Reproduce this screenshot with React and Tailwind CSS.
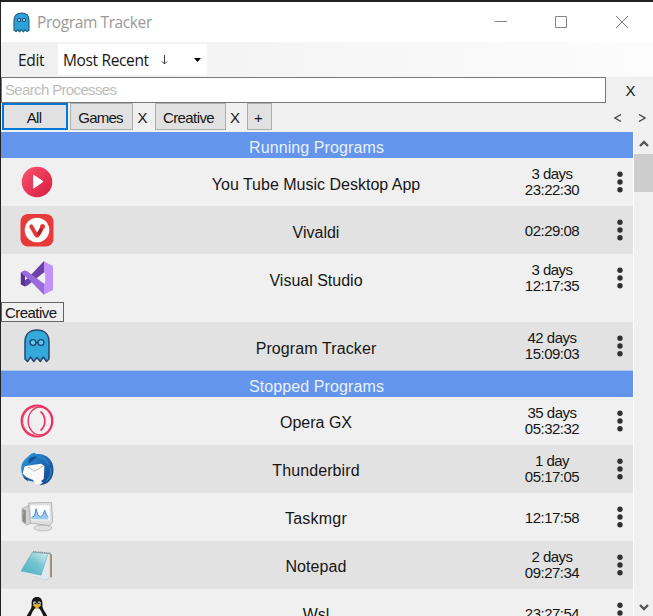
import React from 'react';

function Ghost({ className }) {
  return (
    <svg className={className} viewBox="0 0 26 34">
      <path
        d="M1 30V13C1 5 6 1 13 1s12 4 12 12v17l-2.5 2.500-3.200-4.500-3 4.500L13 28.500 9.700 32.500l-3-4.500L3.500 32.500z"
        fill="#34a9da" stroke="#26446f" strokeWidth="1.5" strokeLinejoin="round"
      />
      <g fill="#5fd0f2" stroke="#20406e" strokeWidth="1.3">
        <circle cx="9" cy="13.6" r="2.9" />
        <circle cx="17" cy="13.6" r="2.9" />
      </g>
      <path d="M12 13.6h2" stroke="#20406e" strokeWidth="1.2" />
    </svg>
  );
}

function SmallGhost() {
  return (
    <svg className="h-[21px] w-[17px]" viewBox="0 0 17 21">
      <path
        d="M1 18V8.500C1 3.500 4 1 8.500 1S16 3.500 16 8.500V18l-2 1.700-1.800-2-1.800 2.200-1.900-2.200-1.900 2.200-1.800-2.200-1.800 2z"
        fill="#2da2d6" stroke="#1c5a85" strokeWidth="1.1" strokeLinejoin="round"
      />
      <g fill="#173f66">
        <circle cx="6" cy="8" r="2" />
        <circle cx="11" cy="8" r="2" />
      </g>
      <g fill="#d9f6ff">
        <circle cx="6" cy="8" r="1" />
        <circle cx="11" cy="8" r="1" />
      </g>
    </svg>
  );
}

function YouTubeMusic() {
  return (
    <svg className="size-8" viewBox="0 0 32 32">
      <defs>
        <linearGradient id="ytm" x1="0" y1="0" x2="1" y2="1">
          <stop offset="0" stopColor="#f95570" />
          <stop offset="1" stopColor="#d91a3e" />
        </linearGradient>
      </defs>
      <circle cx="16" cy="16" r="15.3" fill="url(#ytm)" />
      <path d="M12.7 9.3 22 15.5l-9.3 6.6z" fill="#fff" stroke="#fff" strokeWidth="1" strokeLinejoin="round" />
    </svg>
  );
}

function Vivaldi() {
  return (
    <svg className="size-[34px]" viewBox="0 0 34 34">
      <rect x=".5" y="1" width="33" height="32.5" rx="7.5" fill="#e93a3b" />
      <circle cx="17" cy="17" r="12.3" fill="#fff" />
      <path d="M11.3 13.4 16.2 22q.9 1.4 1.8 0l3.6-6.2" fill="none" stroke="#e23a3b" strokeWidth="4" strokeLinecap="round" strokeLinejoin="round" />
      <circle cx="22.5" cy="13.4" r="2.5" fill="#e23a3b" />
      <path d="m18.7 20.8 2.4-4.2" stroke="#a92128" strokeWidth="3" strokeLinecap="round" />
    </svg>
  );
}

function VisualStudio() {
  return (
    <svg className="size-[34px]" viewBox="0 0 34 34">
      <path d="M.8 11.500 5 9.500v16L.8 23.500z" fill="#563196" />
      <path d="M4.500 19.800 8.500 16.600 23.500.6h1V11L7.500 24.400 5 25.500z" fill="#6b42a8" />
      <path d="M.8 11.500 5 9.500l2.500 1L24.500 23v10.500h-1L8.500 18 4.500 15z" fill="#9a6bdc" />
      <path d="m24 .5 9 4.600v23.800l-9 4.600V23l1.200-1.500v-9L24 11z" fill="#c391fb" />
    </svg>
  );
}

function OperaGX() {
  return (
    <svg className="size-[34px]" viewBox="0 0 34 34">
      <g fill="none" stroke="#ec3361">
        <circle cx="17" cy="17" r="15.500" strokeWidth="1.900" />
        <ellipse cx="20" cy="17" rx="11.800" ry="14" strokeWidth="1.400" />
        <path d="M15 2.700C-1.500 6 -1.500 28 15 31.300" strokeWidth="1" />
        <path d="M20.500 7.500c5.800 5 5.800 14 0 19" strokeWidth="1.700" />
      </g>
    </svg>
  );
}

function Thunderbird() {
  return (
    <svg className="size-[34px]" viewBox="0 0 34 34">
      <defs>
        <linearGradient id="bird" x1="0" y1="0" x2="1" y2="1">
          <stop offset="0" stopColor="#2b9fdc" />
          <stop offset=".5" stopColor="#1f69b4" />
          <stop offset="1" stopColor="#173e86" />
        </linearGradient>
      </defs>
      <path d="M11.5 1.5 15 .8l1 1.4C26 1 33.5 8 33.5 17.5S28 33 19.5 33.2l4-3.2-6.5.3-8-1.6L3.8 26C-.6 18 .7 9.600 7 5.500z" fill="url(#bird)" />
      <path d="m4.500 14.500 2.500-.7 14-2 3.400 2.200-.7 13-2.400 1.800.5 2.200-5.800 1.500L13 28l-6.500-2.700-3.900-3.800z" fill="#fafafa" />
      <path d="m8 15 6.500 4.300L23.500 14" fill="none" stroke="#b9b5a8" strokeWidth=".9" />
      <path d="m4 25.500 2.600.8 1.500 3.200L4.900 27z" fill="#272e4e" />
      <path d="M9 7.500c2-3 6-3.500 8.500-2.500-2.500 1-3.500 3.500-7.500 4.800z" fill="#155093" />
      <path d="M17 4.500c6 0 11 4.500 11.500 9M26 29c4-3 5.500-8 4.500-13" fill="none" stroke="#3b8dd0" strokeWidth="1.500" opacity=".7" />
      <circle cx="9.500" cy="9.800" r=".9" fill="#0e2d5c" />
    </svg>
  );
}

function TaskManager() {
  return (
    <svg className="h-[30px] w-[34px]" viewBox="0 0 34 30">
      <path d="m2 6.500 6-2.700 5 1.500v15L6.500 23 2 19.500z" fill="#d2d2d2" stroke="#a0a0a0" strokeWidth=".6" />
      <path d="m2.500 7 3.300 1.200v13.500L2.500 19z" fill="#8b8b84" />
      <path d="M3.300 9.500v3" stroke="#9fb45c" strokeWidth="1" />
      <path d="M19 22h7l.6 4h-7.400z" fill="#b9b9b9" />
      <ellipse cx="23" cy="26" rx="9" ry="2.900" fill="#e0e0e0" stroke="#b0b0b0" strokeWidth=".7" />
      <path d="m8.500 1 23-.7 1.200 19.200L30 23.500l-19.500-2.200z" fill="#dedede" stroke="#a9a9a9" strokeWidth=".8" />
      <path d="m10.500 3.500 19-.3.600 15.300-18.700-.3z" fill="#fbfdff" />
      <path d="m11.500 16.500 3-2.500 1.600-7.500 1.700 6.500 2.700 1.700 2.500-2 1.700-4.700 1.600 5 2 1.500v3l-16.700-.2z" fill="#9cc8eb" />
      <path d="m11.500 15.500 3-1.700 1.600-7 1.700 6.200 2.700 1.700 2.500-2 1.700-4.500 1.600 4.800 2 1.500" fill="none" stroke="#4a8ccb" strokeWidth="1" />
    </svg>
  );
}

function Notepad() {
  return (
    <svg className="h-[31px] w-[34px]" viewBox="0 0 34 31">
      <defs>
        <linearGradient id="pad" x1="0" y1="1" x2=".9" y2="0">
          <stop offset="0" stopColor="#4cb1c2" />
          <stop offset=".55" stopColor="#74c3d0" />
          <stop offset="1" stopColor="#d0edf1" />
        </linearGradient>
      </defs>
      <path d="m28 3 4 1.500V27l-4 1z" fill="#a88a5b" />
      <path d="m28 3 2 1.500V28L25 30l-11-4z" fill="#e0e9ee" stroke="#b4bfc6" strokeWidth=".5" />
      <path d="M12.500 2 28 3.500 21 25.500 1 21z" fill="url(#pad)" stroke="#68aab6" strokeWidth=".6" />
      <path d="M1 21.500 21 25.800l3.500 3.700z" fill="#dcebf0" />
      <path d="m13 1.800 18 1.600" stroke="#7d8b8e" strokeWidth="1.600" strokeDasharray="1.2 1" />
    </svg>
  );
}

function Tux() {
  return (
    <svg className="h-[34px] w-7" viewBox="0 0 28 34">
      <path d="M14 1c-4 0-5.600 3-5.400 7 .2 3.500-.6 5-2.600 8-2.500 4-4.500 8-3.500 13h23c1-5-1-9-3.500-13-2-3-2.800-4.500-2.600-8C19.600 4 18 1 14 1z" fill="#171717" />
      <path d="M14 12c-3 0-4 3-5.500 6S6 25 8 29h12c2-4 1-8-.5-11S17 12 14 12z" fill="#f5f5f5" />
      <ellipse cx="11.700" cy="7.200" rx="1.700" ry="2" fill="#b8b8b8" />
      <ellipse cx="16.300" cy="7.200" rx="1.700" ry="2" fill="#b8b8b8" />
      <circle cx="12.200" cy="7.500" r=".8" fill="#222" />
      <circle cx="15.900" cy="7.500" r=".8" fill="#222" />
      <path d="M9.800 9.300 14 7.800l4.200 1.500L14 13z" fill="#e4b323" />
    </svg>
  );
}

function Kebab() {
  return (
    <svg className="h-[22px] w-1.5" viewBox="0 0 6 22" fill="#303030">
      <circle cx="3" cy="3.300" r="2.700" />
      <circle cx="3" cy="11" r="2.700" />
      <circle cx="3" cy="18.700" r="2.700" />
    </svg>
  );
}

function Row({ icon, name, days, time, shaded, stopped, tracking = 'tracking-normal' }) {
  return (
    <div className={`grid h-12 shrink-0 grid-cols-[114px_402px_70px_46px] items-center ${shaded ? 'bg-[#e2e2e2]' : 'bg-[#f0f0f0]'}`}>
      <div className="flex w-[72px] justify-center">{icon}</div>
      <div className={`text-center text-[16px] leading-5 ${stopped ? 'pt-1' : 'pt-1.5'} ${tracking}`}>{name}</div>
      <div className={`text-center text-[15px] leading-4 tracking-[-0.5px] ${days ? '' : 'pt-0.5'}`}>
        {days && <div>{days}</div>}
        <div>{time}</div>
      </div>
      <div className="pl-[30px]"><Kebab /></div>
    </div>
  );
}

function Heading({ children }) {
  return (
    <div className="h-[26px] shrink-0 bg-[#6495ed] pt-1.5 pr-px text-center text-[16px] leading-5 tracking-[0.1px] text-[#e9f1ff]">
      {children}
    </div>
  );
}

const tab = 'flex h-[27px] items-center justify-center bg-[#e1e1e1] pt-[3px] text-[15px] leading-5';

export default function App() {
  return (
    <div className="flex h-[616px] w-[653px] flex-col overflow-hidden border-t-2 border-l border-[#242124] bg-[#f0f0f0] font-['Liberation_Sans',sans-serif] text-[#161616]">
      <header className="flex h-10 shrink-0 items-center bg-white pl-3">
        <SmallGhost />
        <h1 className="ml-[7px] flex-1 pt-0.5 font-['Open_Sans',sans-serif] text-[15.500px] tracking-[-0.4px] text-[#999]">Program Tracker</h1>
        <svg className="mr-[25px] h-3 w-[133px]" viewBox="0 0 133 12" fill="none" stroke="#858585">
          <path d="M0 5.500h12M60.500.5h11v11h-11zM121 0l12 12M133 0l-12 12" />
        </svg>
      </header>

      <nav className="flex h-[35px] shrink-0 items-center bg-linear-to-r from-[#f0f0f0] to-[#fcfcfc] font-['Open_Sans',sans-serif] text-[15.500px] tracking-[-0.35px]">
        <span className="w-[57px] pt-0.5 pl-[17px]">Edit</span>
        <div className="flex h-[31px] w-[149px] items-center bg-white pl-[5px]">
          <span className="w-[97px] pt-0.5">Most Recent</span>
          <svg className="h-2.5 w-[9px]" viewBox="0 0 9 10" fill="none" stroke="#444">
            <path d="M4.500 0v9M2 6.500l2.500 2.500L7 6.500" />
          </svg>
          <svg className="ml-[25px] h-1 w-[7px]" viewBox="0 0 7 4"><path d="M0 0h7L3.500 4z" fill="#000" /></svg>
        </div>
      </nav>

      <div className="flex h-[26px] shrink-0 items-center">
        <div className="flex h-[26px] w-[605px] shrink-0 items-center border border-[#777] bg-white pl-[3px] text-[15px] tracking-[-0.65px] text-[#bcbcbc]">Search Processes</div>
        <span className="flex-1 pt-0.5 pl-0.5 text-center text-[15px]">X</span>
      </div>

      <div className="flex h-[29px] shrink-0 items-start text-[15px]">
        <button className={`${tab} ml-[1px] w-[66px] border-2 border-[#0078d7] pr-0.5 tracking-[-0.7px]`}>All</button>
        <button className={`${tab} ml-[2px] w-[63px] border border-[#adadad] pr-0.5 tracking-[-0.8px]`}>Games</button>
        <span className="w-[19px] text-center leading-[30px]">X</span>
        <button className={`${tab} ml-[3px] w-[71px] border border-[#adadad] pr-1 tracking-[-0.6px]`}>Creative</button>
        <span className="w-[18px] text-center leading-[30px]">X</span>
        <button className={`${tab} ml-[3px] w-[25px] border border-[#adadad] pr-0.5`}>+</button>
        <svg className="mt-[11px] mr-[7px] ml-auto h-2 w-8" viewBox="0 0 32 8" fill="none" stroke="#444" strokeWidth="1.300">
          <path d="M7 .5 1 4l6 3.500M25 .5 31 4l-6 3.500" />
        </svg>
      </div>

      <div className="flex min-h-0 flex-1">
        <main className="flex w-[632px] shrink-0 flex-col overflow-hidden">
          <Heading>Running Programs</Heading>
          <Row icon={<YouTubeMusic />} name="You Tube Music Desktop App" days="3 days" time="23:22:30" />
          <Row icon={<Vivaldi />} name="Vivaldi" time="02:29:08" shaded />
          <Row icon={<VisualStudio />} name="Visual Studio" days="3 days" time="12:17:35" />
          <div className="h-5 shrink-0">
            <div className="flex h-5 w-[63px] items-center border border-[#646464] pt-0.5 pl-[3px] text-[15px] tracking-[-0.55px]">Creative</div>
          </div>
          <Row icon={<Ghost className="h-[34px] w-[26px]" />} name="Program Tracker" days="42 days" time="15:09:03" shaded tracking="tracking-[0.1px]" />
          <div className="h-px shrink-0 bg-[#b3c7eb]" />
          <Heading>Stopped Programs</Heading>
          <Row stopped icon={<OperaGX />} name="Opera GX" days="35 days" time="05:32:32" />
          <Row stopped icon={<Thunderbird />} name="Thunderbird" days="1 day" time="05:17:05" shaded tracking="tracking-[0.1px]" />
          <Row stopped icon={<TaskManager />} name="Taskmgr" time="12:17:58" tracking="tracking-[0.2px]" />
          <Row stopped icon={<Notepad />} name="Notepad" days="2 days" time="09:27:34" shaded tracking="tracking-[0.1px]" />
          <Row stopped icon={<Tux />} name="Wsl" time="23:27:54" />
        </main>
        <aside className="flex flex-1 flex-col items-center border-l border-white bg-[#f0f0f0]">
          <svg className="mt-2 h-[7px] w-2.5" viewBox="0 0 10 7" fill="none" stroke="#555" strokeWidth="2.400"><path d="M1 6 5 2l4 4" /></svg>
          <div className="mt-[7px] h-[38px] w-full bg-[#cdcdcd]" />
          <svg className="mt-auto mb-[5px] h-[7px] w-2.5" viewBox="0 0 10 7" fill="none" stroke="#555" strokeWidth="2.400"><path d="m1 1 4 4 4-4" /></svg>
        </aside>
      </div>
    </div>
  );
}
